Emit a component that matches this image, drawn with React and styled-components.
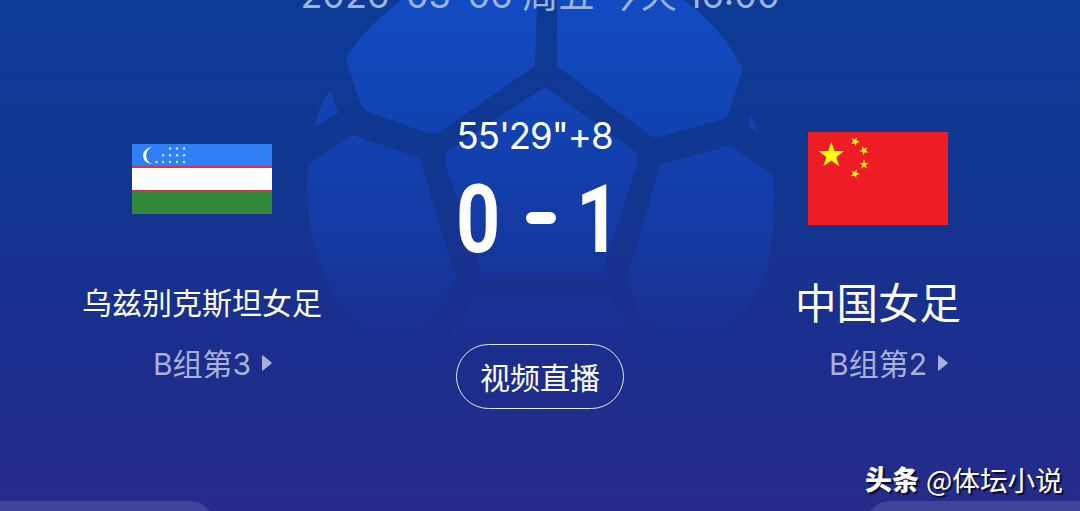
import React from "react";
import styled, { createGlobalStyle } from "styled-components";

const home = {
  name: "乌兹别克斯坦女足",
  rank: "B组第3",
};

const away = {
  name: "中国女足",
  rank: "B组第2",
};

export default function App() {
  return (
    <>
      <GlobalStyle />
      <Page>
        <Football />
        <DateLine>2026-03-06 周五 今天 16:00</DateLine>
        <Match>
          <Team>
            <FlagBox>
              <UzbekistanFlag />
            </FlagBox>
            <TeamName size={30}>{home.name}</TeamName>
            <Rank text={home.rank} />
          </Team>
          <Center>
            <Clock>55'29"+8</Clock>
            <Score>
              <Digit>0</Digit>
              <Dash />
              <Digit>1</Digit>
            </Score>
            <LiveButton>视频直播</LiveButton>
          </Center>
          <Team>
            <FlagBox>
              <ChinaFlag />
            </FlagBox>
            <TeamName size={41.5}>{away.name}</TeamName>
            <Rank text={away.rank} />
          </Team>
        </Match>
        <Cards>
          <Card side="left" />
          <Card side="right" />
        </Cards>
        <Watermark>
          <b>头条</b>
          <span>@体坛小说</span>
        </Watermark>
      </Page>
    </>
  );
}

function Rank({ text }) {
  return (
    <RankRow>
      <span>{text}</span>
      <svg width="10" height="16" viewBox="0 0 10 16">
        <path d="M0 1Q0 0 1 .5L9.3 7.2Q10 8 9.3 8.8L1 15.5Q0 16 0 15Z" fill="currentColor" />
      </svg>
    </RankRow>
  );
}

function Football() {
  return (
    <Ball viewBox="0 0 1080 511">
      <defs>
        <linearGradient id="ball" gradientUnits="userSpaceOnUse" x1="0" y1="0" x2="0" y2="360">
          <stop offset="0" stopColor="#114bc2" />
          <stop offset="0.45" stopColor="#1240ad" />
          <stop offset="0.75" stopColor="#15379f" stopOpacity="0.9" />
          <stop offset="1" stopColor="#1a3096" stopOpacity="0" />
        </linearGradient>
      </defs>
      <g fill="url(#ball)">
        <path d="M537 0L535 66L438 133Q433 135 428 133L368 112Q363 110 361 105L347 62Q346 57 349 53Q368 25 402 0Z" />
        <path d="M557 0V66L651 136Q655 139 660 137L723 119Q728 117 729 112L742 72Q743 68 740 64Q722 29 684 0Z" />
        <path d="M330 90L338 113L314 128Q319 107 330 90Z" />
        <path d="M751 115L758 132L748 127Z" />
        <path d="M545 87L636 152Q639 156 637 165L602 273H482L447 170Q444 153 449 150Z" />
        <path d="M352 135L420 158L425 175L456 281L427 322Q390 350 366 335Q330 300 313 243Q305 205 308 165Z" />
        <path d="M730 145L773 176Q779 225 764 280Q745 315 718 337Q670 343 642 315L627 281L660 165Z" />
        <path d="M480 296H606L632 333L600 360H480L450 333Z" />
      </g>
    </Ball>
  );
}

function UzbekistanFlag() {
  const stars = [
    [38, 4.5], [45, 4.5], [52, 4.5],
    [31, 11.3], [38, 11.3], [45, 11.3], [52, 11.3],
    [24.5, 18], [31, 18], [38, 18], [45, 18], [52, 18],
  ];
  return (
    <svg width="140" height="70" viewBox="0 0 140 70">
      <rect width="140" height="22" fill="#2f80f6" />
      <rect y="22" width="140" height="26" fill="#d23355" />
      <rect y="24" width="140" height="22" fill="#fff" />
      <rect y="48" width="140" height="22" fill="#32883a" />
      <path d="M20.5 3.3A8.6 8.6 0 0 0 20.5 20A9.2 9.2 0 0 1 20.5 3.3Z" fill="none" />
      <path d="M20.5 3.3C8 3.8 8 19.5 20.5 20C12.2 17.6 12.2 5.7 20.5 3.3Z" fill="#fff" />
      {stars.map(([x, y]) => (
        <circle key={`${x}-${y}`} cx={x} cy={y} r="1.2" fill="#d5e6ff" />
      ))}
    </svg>
  );
}

function ChinaFlag() {
  const star = "M0-1L.225-.309H.951L.363.118L.588.809L0 .382L-.588.809L-.363.118L-.951-.309H-.225Z";
  return (
    <svg width="140" height="93" viewBox="0 0 140 93">
      <rect width="140" height="93" fill="#ee1c25" />
      <g fill="#ff0">
        <path d={star} transform="translate(23.3 23.3) scale(13.6)" />
        <path d={star} transform="translate(47 9.5) rotate(24) scale(4.8)" />
        <path d={star} transform="translate(56 18.5) rotate(46) scale(4.8)" />
        <path d={star} transform="translate(56 32.5) scale(4.8)" />
        <path d={star} transform="translate(47 41.7) rotate(22) scale(4.8)" />
      </g>
    </svg>
  );
}

const GlobalStyle = createGlobalStyle`
  body {
    margin: 0;
    font-family: Inter, "Noto Sans CJK SC", sans-serif;
    color: #fff;
  }
  * {
    box-sizing: border-box;
  }
`;

const Page = styled.div`
  position: relative;
  width: 1080px;
  height: 511px;
  overflow: hidden;
  display: flex;
  flex-direction: column;
  background: linear-gradient(#0b3b96 0, #12368f 35%, #1b2e8d 68%, #262b8a 100%);
  > * {
    flex-shrink: 0;
  }
`;

const Ball = styled.svg`
  position: absolute;
  inset: 0;
`;

const DateLine = styled.p`
  position: relative;
  height: 50px;
  margin: -28px 0 0;
  font-size: 36px;
  line-height: 47px;
  text-align: center;
  white-space: nowrap;
  color: #9cb5df;
`;

const Match = styled.div`
  position: relative;
  display: grid;
  grid-template-columns: 404px 272px 404px;
  height: 444px;
`;

const Team = styled.div`
  display: flex;
  flex-direction: column;
  align-items: center;
  padding-top: 110px;
`;

const FlagBox = styled.div`
  height: 93px;
  display: flex;
  align-items: center;
  svg {
    display: block;
  }
`;

const TeamName = styled.p`
  height: 60px;
  margin: 48px 0 0;
  font-size: ${({ size }) => size}px;
  line-height: ${({ size }) => (size > 40 ? 63 : 60)}px;
  white-space: nowrap;
`;

const RankRow = styled.div`
  display: flex;
  align-items: center;
  gap: 11px;
  height: 44px;
  margin-top: 8px;
  padding-left: 21px;
  font-size: 30px;
  line-height: 46px;
  color: #a9b1da;
  span {
    padding-top: 1px;
  }
`;

const Center = styled.div`
  display: flex;
  flex-direction: column;
  align-items: center;
`;

const Clock = styled.p`
  height: 44px;
  margin: 92px 11px 0 0;
  font-size: 36.5px;
  line-height: 44px;
  letter-spacing: -1px;
`;

const Score = styled.div`
  display: flex;
  align-items: center;
  justify-content: center;
  height: 80px;
  margin: 22px 4px 0 0;
`;

const Digit = styled.span`
  width: 58px;
  font-family: Roboto, sans-serif;
  font-size: 94px;
  font-weight: 700;
  line-height: 80px;
  text-align: center;
  transform: scaleX(0.82);
`;

const Dash = styled.i`
  width: 30px;
  height: 12px;
  margin: 0 13px 4px 19px;
  border-radius: 6px;
  background: #fff;
`;

const LiveButton = styled.button`
  width: 168px;
  height: 65px;
  margin-top: 84px;
  padding: 2px 0 0;
  border: 1px solid #e3e8f8;
  border-radius: 33px;
  background: none;
  color: #fff;
  font-family: inherit;
  font-size: 30px;
  line-height: 60px;
`;

const Watermark = styled.div`
  position: absolute;
  right: 17px;
  bottom: 12px;
  display: flex;
  align-items: center;
  gap: 7px;
  height: 40px;
  font-family: "Noto Sans CJK SC", sans-serif;
  font-size: 27.7px;
  line-height: 40px;
  text-shadow: 2px 2px 1px #0a0c30;
  b {
    font-weight: 900;
    font-size: 27px;
  }
`;

const Cards = styled.div`
  position: relative;
  display: flex;
  justify-content: space-between;
  margin-top: 35px;
`;

const Card = styled.div`
  width: 214px;
  height: 60px;
  background: #3f4598;
  border-radius: ${({ side }) => (side === "left" ? "0 24px 0 0" : "24px 0 0 0")};
`;
